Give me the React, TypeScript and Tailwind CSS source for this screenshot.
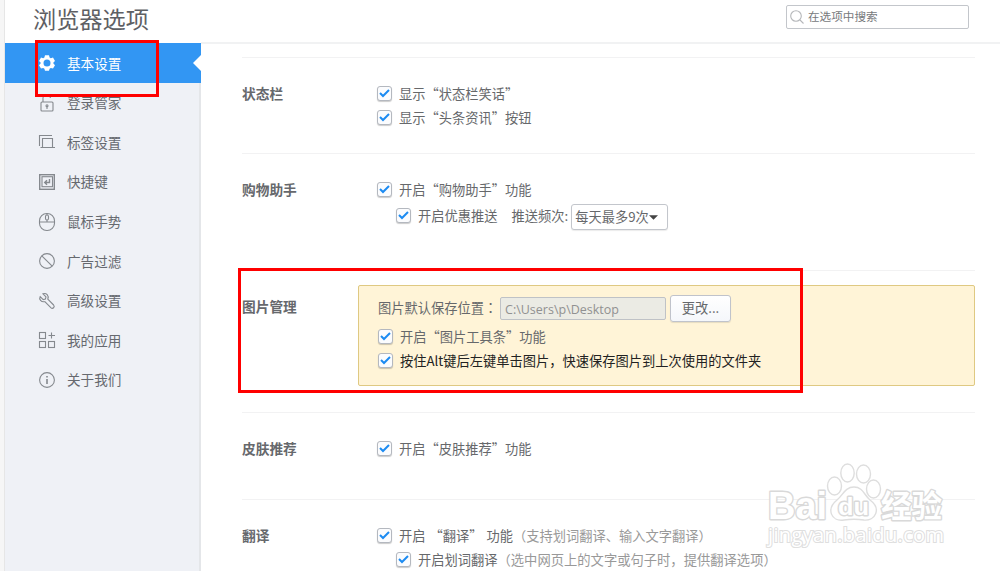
import type { ReactNode } from 'react'
import clsx from 'clsx'

const icons = {
  gear: (
    <path
      fill="#fff"
      stroke="none"
      fillRule="evenodd"
      d="M6 .3h4l.6 2.2 1.2.7 2.2-.6 2 3.4-1.6 1.6v1l1.6 1.6-2 3.4-2.2-.6-1.2.7-.6 2.1H6l-.6-2.1-1.2-.7-2.2.6-2-3.4 1.6-1.6v-1L0 6l2-3.4 2.2.6 1.2-.7zM8 4.600a3.500 3.500 0 1 0 0 7 3.500 3.500 0 0 0 0-7z"
    />
  ),
  lock: (
    <>
      <rect x="2" y="7" width="12" height="9" rx="1" />
      <path d="M4 7V4.500a3.500 3.500 0 0 1 7.500-1.500M8 11.500v2.500" />
      <circle cx="8" cy="10.800" r="1" />
    </>
  ),
  tabs: <path d="M.5 12V1.500H13M3.500 13.500V4.500h10v9M1.500 13.500H16" />,
  keyboard: (
    <>
      <rect x=".7" y=".7" width="14.600" height="14.600" strokeWidth="1.400" />
      <rect x="3" y="2.700" width="10.500" height="10" />
      <path strokeWidth="1.400" d="M10.500 5v3.500H5.800M8 6.200l-2.300 2.300L8 10.800" />
    </>
  ),
  mouse: (
    <>
      <rect x=".5" y="-.5" width="15" height="17" rx="7.300" />
      <path d="M.5 8h15M8 -.5v1.500M8 6v2" />
      <rect x="6.500" y="1" width="3" height="5" rx="1.500" />
    </>
  ),
  block: (
    <>
      <circle cx="8" cy="8" r="7.400" />
      <path d="M2.800 2.800l10.400 10.400" />
    </>
  ),
  wrench: (
    <path d="M4 .8l3 3-.6 2.200-2.200.6-3-3C-.2 6.200 2 9.400 5.800 8.700l6 6c2 1.800 4.500-.8 2.800-2.700L8.800 6.200C10.200 2.800 7.300-.5 4 .8z" />
  ),
  apps: (
    <>
      <rect x=".5" y=".5" width="6" height="6" />
      <rect x=".5" y="9.500" width="6" height="6" />
      <rect x="9.500" y="9.500" width="6" height="6" />
      <path d="M12.500 .5v6M9.500 3.500h6.500" />
    </>
  ),
  info: (
    <>
      <circle cx="8" cy="8" r="7.400" />
      <path strokeWidth="1.600" d="M8 7v5M8 4v1.600" />
    </>
  ),
}

const NAV_ITEMS: { icon: keyof typeof icons; label: string }[] = [
  { icon: 'gear', label: '基本设置' },
  { icon: 'lock', label: '登录管家' },
  { icon: 'tabs', label: '标签设置' },
  { icon: 'keyboard', label: '快捷键' },
  { icon: 'mouse', label: '鼠标手势' },
  { icon: 'block', label: '广告过滤' },
  { icon: 'wrench', label: '高级设置' },
  { icon: 'apps', label: '我的应用' },
  { icon: 'info', label: '关于我们' },
]

function Sidebar() {
  return (
    <nav className="w-[196px] shrink-0 border-r-2 border-[#e4e6e9] bg-[#eff1f6]">
      {NAV_ITEMS.map(({ icon, label }, index) => {
        const active = index === 0
        return (
          <div
            key={label}
            className={clsx(
              'relative flex h-[39.6px] items-center pl-[34px] text-[13.6px]',
              active ? '-mr-0.5 bg-[#3296f3] text-white' : 'text-[#66696f]',
            )}
          >
            <svg
              className="mt-px mr-3 size-4 shrink-0 overflow-visible"
              viewBox="0 0 16 16"
              fill="none"
              stroke="#85898e"
              strokeWidth="1.1"
            >
              {icons[icon]}
            </svg>
            {label}
            {active && (
              <svg className="absolute top-3 right-0 h-4 w-2" viewBox="0 0 8 16">
                <path d="M8 0v16L0 8z" fill="#fff" />
              </svg>
            )}
          </div>
        )
      })}
    </nav>
  )
}

function CheckRow({ children, nested, className }: { children: ReactNode; nested?: boolean; className?: string }) {
  return (
    <div className={clsx('flex items-center whitespace-nowrap', nested && 'pl-[19px]', className ?? 'h-6')}>
      <span className="mr-[7px] mb-px flex size-[15px] shrink-0 items-center justify-center rounded-[3px] border border-[#b4b8bf] bg-[#fbfcfe] shadow-[0_1px_1px_rgba(0,0,0,0.2)]">
        <svg className="size-[11px]" viewBox="0 0 11 11" fill="none" stroke="#1c8bf2" strokeWidth="2">
          <path d="M1 5l3 3 6-6" />
        </svg>
      </span>
      {children}
    </div>
  )
}

function Section({ title, className, children }: { title: string; className: string; children: ReactNode }) {
  return (
    <section className={clsx('flex shrink-0 border-t border-[#f2f2f3]', className)}>
      <h2 className="mt-6 h-6 w-[116px] shrink-0 text-[13.7px] leading-[23px] font-bold text-[#66686c]">{title}</h2>
      {children}
    </section>
  )
}

function Watermark() {
  return (
    <svg
      className="absolute top-[455px] left-[760px] h-[100px] w-[195px]"
      viewBox="0 0 195 100"
      fill="#fff"
      stroke="#dedede"
      strokeWidth="1.4"
    >
      <g>
        <ellipse cx="74.500" cy="31" rx="7" ry="9" />
        <ellipse cx="87.500" cy="18" rx="6.700" ry="9" />
        <ellipse cx="103.500" cy="19" rx="7" ry="9" />
        <ellipse cx="113.500" cy="34" rx="7" ry="9" />
        <path d="M94 32c9 0 10 8 16 13 12 9 5 21-6 20-7-1-13-1-20 0-13 2-18-11-7-20 6-5 8-13 17-13z" />
      </g>
      <g fontWeight="bold" strokeLinejoin="round" paintOrder="stroke" stroke="#d9d9d9" strokeWidth="2.8">
        <text x="8" y="63.500" fontSize="38" textLength="59" lengthAdjust="spacingAndGlyphs" fontFamily="Liberation Sans, sans-serif">Bai</text>
        <text x="78" y="60" fontSize="24" textLength="31" lengthAdjust="spacingAndGlyphs" fontFamily="Liberation Sans, sans-serif">du</text>
        <text x="121" y="61.500" fontSize="31" textLength="61" lengthAdjust="spacingAndGlyphs" fontFamily="Noto Sans CJK SC, sans-serif">经验</text>
      </g>
      <text x="8" y="87" fontSize="20" textLength="176" stroke="#dfdfdf" strokeWidth="2.2" paintOrder="stroke" fontFamily="Open Sans, sans-serif">
        jingyan.baidu.com
      </text>
    </svg>
  )
}

export default function App() {
  return (
    <div className="relative flex h-[571px] w-[1000px] overflow-hidden bg-white font-['Noto_Sans_CJK_SC',sans-serif] text-[13.25px] text-[#66686b]">
      <div className="w-[5px] shrink-0 border-r border-[#e6e6e6] bg-[#f6f6f6]" />

      <div className="flex min-w-0 flex-1 flex-col">
        <header className="flex h-[43px] shrink-0 items-start justify-between pr-[31px] pl-7">
          <h1 className="mt-[3px] text-[23.2px] leading-[30px] text-[#5e6064]">浏览器选项</h1>
          <div className="mt-[5px] flex h-6 w-[183px] items-center rounded-[2px] border border-[#c3c6cb] pl-[3px] text-[11.6px] text-[#77797c]">
            <svg className="mr-1 size-[14px]" viewBox="0 0 14 14" fill="none" stroke="#b5b7ba" strokeWidth="1.1">
              <circle cx="6" cy="6" r="5.3" />
              <path d="M10 10l3.500 3.500" />
            </svg>
            在选项中搜索
          </div>
        </header>

        <div className="flex min-h-0 flex-1">
          <Sidebar />

          <main className="-mt-px flex min-w-0 flex-1 flex-col border-t-2 border-[#f1f2f3] pt-[13px] pr-[25px] pl-[41px]">
            <Section title="状态栏" className="h-24">
              <div className="pt-6 pl-[19px]">
                <CheckRow>显示“状态栏笑话”</CheckRow>
                <CheckRow>显示“头条资讯”按钮</CheckRow>
              </div>
            </Section>

            <Section title="购物助手" className="h-[117px]">
              <div className="pt-6 pl-[19px]">
                <CheckRow>开启“购物助手”功能</CheckRow>
                <CheckRow nested className="h-7">
                  <span>开启优惠推送</span>
                  <span className="ml-3.5">推送频次:</span>
                  <span className="mt-0.5 ml-[3px] flex h-[26px] w-[97px] items-center rounded-[3px] border border-[#c3c6cc] bg-white pl-[3px] shadow-[0_1px_1px_rgba(0,0,0,0.08)]">
                    每天最多9次
                    <svg className="h-[5px] w-[9px]" viewBox="0 0 8 4">
                      <path d="M0 0h8L4 4z" fill="#444" />
                    </svg>
                  </span>
                </CheckRow>
              </div>
            </Section>

            <Section title="图片管理" className="h-[142px]">
              <div className="mt-3.5 h-[101px] flex-1 rounded-[2px] border border-[#dfc982] bg-[#fff4d7] pt-2 pl-[19px]">
                <div className="flex h-[31px] items-center whitespace-nowrap">
                  <span className="-mt-[3px]">图片默认保存位置</span>
                  <span className="-mt-[3px] w-[13px] font-['Noto_Sans_CJK_TC',sans-serif]" lang="zh-TW">：</span>
                  <span className="-mt-[3px] ml-[3px] h-[23px] w-[166px] rounded-[2px] border border-[#bfc2c6] bg-[#ebebe4] pl-1 font-['Open_Sans',sans-serif] text-[12.5px] leading-[24px] text-[#919191]">
                    C:\Users\p\Desktop
                  </span>
                  <button className="-mt-[3px] ml-1 h-[27px] w-[61px] rounded-[3px] border border-[#c0c3cb] bg-gradient-to-b from-white to-[#f5f7fb] shadow-[0_1px_1px_rgba(0,0,0,0.1)]">
                    更改...
                  </button>
                </div>
                <CheckRow>开启“图片工具条”功能</CheckRow>
                <CheckRow>
                  <span className="text-[#222]">按住Alt键后左键单击图片，快速保存图片到上次使用的文件夹</span>
                </CheckRow>
              </div>
            </Section>

            <Section title="皮肤推荐" className="h-[87px]">
              <div className="pt-6 pl-[19px]">
                <CheckRow>开启“皮肤推荐”功能</CheckRow>
              </div>
            </Section>

            <Section title="翻译" className="h-[87px]">
              <div className="pt-6 pl-[19px]">
                <CheckRow>
                  <span className="[word-spacing:1px]">开启 “翻译” 功能</span>
                  <span className="text-[#999]">（支持划词翻译、输入文字翻译）</span>
                </CheckRow>
                <CheckRow nested>
                  开启划词翻译
                  <span className="text-[13.3px] text-[#999]">（选中网页上的文字或句子时，提供翻译选项）</span>
                </CheckRow>
              </div>
            </Section>
          </main>
        </div>
      </div>

      <Watermark />

      {/* Highlight frames */}
      <div className="absolute top-10 left-[35px] h-[57px] w-[124px] border-3 border-[#f00]" />
      <div className="absolute top-[268px] left-[238px] h-[125px] w-[565px] border-3 border-[#f00]" />
    </div>
  )
}
